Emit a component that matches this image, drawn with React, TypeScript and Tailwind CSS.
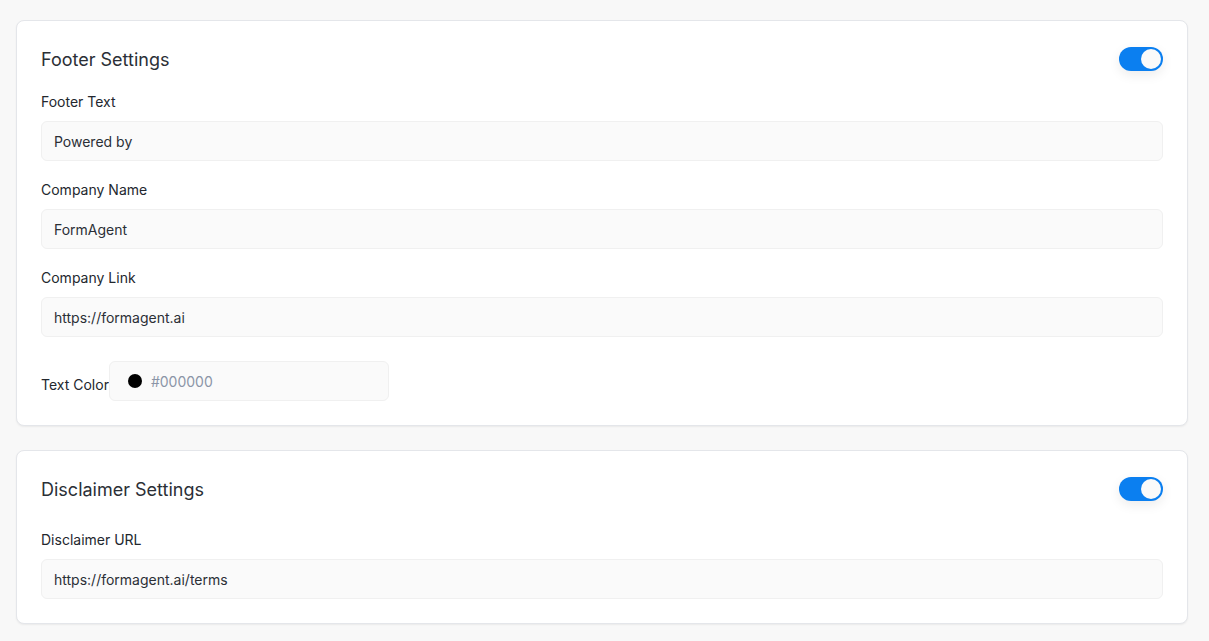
import React from 'react';

function Toggle() {
  return (
    <div className="w-[44px] h-[24px] rounded-full bg-[#0b7ff0] p-[2px] flex justify-end shadow-[0_4px_12px_rgba(0,0,0,0.08)]">
      <div className="w-[20px] h-[20px] rounded-full bg-[#fafafa]"></div>
    </div>
  );
}

function Field({ label, value }: { label: string; value: string }) {
  return (
    <div>
      <div className="text-[14px] leading-[20px] font-normal text-[#23272e] mt-px mb-[9px]">{label}</div>
      <div className="h-[40px] rounded-[6px] border border-[#f0f0f0] bg-[#fafafa] flex items-center px-[12px] text-[14px] text-[#2b2f36]">
        {value}
      </div>
    </div>
  );
}

export default function App() {
  return (
    <div className="min-h-screen bg-[#f8f8f8] pl-[16px] pr-[21px] pt-[20px] pb-[18px] font-['Inter',sans-serif] flex flex-col gap-[24px]">
      <section className="bg-white border border-[#e4e6ea] rounded-[8px] shadow-[0_1px_2px_rgba(0,0,0,0.06)] p-[24px]">
        <div className="flex items-center justify-between h-[28px] mb-[18px]">
          <h2 className="text-[18px] font-normal text-[#2b2f36]">Footer Settings</h2>
          <Toggle />
        </div>
        <div className="flex flex-col gap-[18px]">
          <Field label="Footer Text" value="Powered by" />
          <Field label="Company Name" value="FormAgent" />
          <Field label="Company Link" value="https://formagent.ai" />
          <div className="flex items-center mt-[6px]">
            <span className="text-[14px] font-normal text-[#23272e] mt-[6px]">Text Color</span>
            <div className="w-[280px] h-[40px] rounded-[6px] border border-[#f0f0f0] bg-[#fafafa] flex items-center pl-[18px] gap-[9px]">
              <span className="w-[14px] h-[14px] rounded-full bg-black"></span>
              <span className="text-[14px] text-[#8b95a7]">#000000</span>
            </div>
          </div>
        </div>
      </section>
      <section className="bg-white border border-[#e4e6ea] rounded-[8px] shadow-[0_1px_2px_rgba(0,0,0,0.06)] p-[24px]">
        <div className="flex items-center justify-between h-[28px] mb-[27px]">
          <h2 className="text-[18px] font-normal text-[#2b2f36]">Disclaimer Settings</h2>
          <Toggle />
        </div>
        <Field label="Disclaimer URL" value="https://formagent.ai/terms" />
      </section>
    </div>
  );
}
